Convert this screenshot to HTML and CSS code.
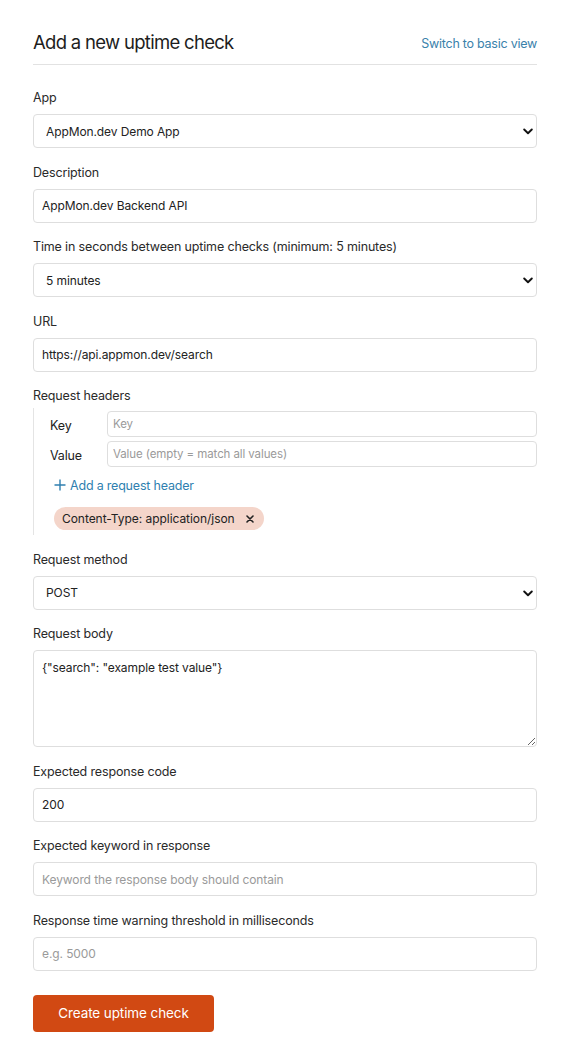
FILE: index.html
```html
<!DOCTYPE html>
<html lang="en">
<head>
<meta charset="utf-8">
<title>Add a new uptime check</title>
<link rel="stylesheet" href="styles.css">
</head>
<body>
<div class="page">
  <div class="header">
    <h1 class="title">Add a new uptime check</h1>
    <a class="switch" href="#">Switch to basic view</a>
  </div>

  <form class="form">
    <div class="field">
      <label class="label">App</label>
      <div class="select-wrap">
        <select class="control select"><option>AppMon.dev Demo App</option></select>
        <svg class="chev" width="10" height="7" viewBox="0 0 10 7"><path d="M1.2 1.5 L5 5.2 L8.8 1.5" fill="none" stroke="#111" stroke-width="1.9" stroke-linecap="round" stroke-linejoin="round"/></svg>
      </div>
    </div>

    <div class="field">
      <label class="label">Description</label>
      <input class="control input" type="text" value="AppMon.dev Backend API">
    </div>

    <div class="field">
      <label class="label">Time in seconds between uptime checks (minimum: 5 minutes)</label>
      <div class="select-wrap">
        <select class="control select"><option>5 minutes</option></select>
        <svg class="chev" width="10" height="7" viewBox="0 0 10 7"><path d="M1.2 1.5 L5 5.2 L8.8 1.5" fill="none" stroke="#111" stroke-width="1.9" stroke-linecap="round" stroke-linejoin="round"/></svg>
      </div>
    </div>

    <div class="field">
      <label class="label">URL</label>
      <input class="control input" type="text" value="https://api.appmon.dev/search">
    </div>

    <div class="field">
      <label class="label label-tight">Request headers</label>
      <div class="headers">
        <div class="hrow">
          <span class="hlabel">Key</span>
          <input class="control small" type="text" placeholder="Key">
        </div>
        <div class="hrow">
          <span class="hlabel">Value</span>
          <input class="control small" type="text" placeholder="Value (empty = match all values)">
        </div>
        <a class="add" href="#">
          <svg width="12" height="12" viewBox="0 0 12 12"><path d="M6 0.5 V11.5 M0.5 6 H11.5" stroke="#2f7fb0" stroke-width="1.4" fill="none"/></svg>
          <span>Add a request header</span>
        </a>
        <div class="chips">
          <span class="chip">Content-Type: application/json
            <svg class="x" width="8" height="8" viewBox="0 0 8 8"><path d="M1 1 L7 7 M7 1 L1 7" stroke="#222" stroke-width="1.6" stroke-linecap="round"/></svg>
          </span>
        </div>
      </div>
    </div>

    <div class="field">
      <label class="label">Request method</label>
      <div class="select-wrap">
        <select class="control select"><option>POST</option></select>
        <svg class="chev" width="10" height="7" viewBox="0 0 10 7"><path d="M1.2 1.5 L5 5.2 L8.8 1.5" fill="none" stroke="#111" stroke-width="1.9" stroke-linecap="round" stroke-linejoin="round"/></svg>
      </div>
    </div>

    <div class="field">
      <label class="label">Request body</label>
      <textarea class="control textarea">{"search": "example test value"}</textarea>
    </div>

    <div class="field">
      <label class="label">Expected response code</label>
      <input class="control input" type="text" value="200">
    </div>

    <div class="field">
      <label class="label">Expected keyword in response</label>
      <input class="control input" type="text" placeholder="Keyword the response body should contain">
    </div>

    <div class="field last">
      <label class="label">Response time warning threshold in milliseconds</label>
      <input class="control input" type="text" placeholder="e.g. 5000">
    </div>

    <button class="submit" type="button">Create uptime check</button>
  </form>
</div>
</body>
</html>
```

FILE: styles.css
```css
* { box-sizing: border-box; }

html, body {
  margin: 0;
  padding: 0;
  background: #ffffff;
}

body {
  font-family: Inter, "Noto Sans", "Liberation Sans", sans-serif;
  font-size: 13px;
  color: #222;
}

.page {
  width: 504px;
  margin-left: 33px;
  padding-top: 30px;
}

.header {
  display: flex;
  justify-content: space-between;
  align-items: center;
  padding-bottom: 10px;
  border-bottom: 1px solid #e2e2e2;
}

.title {
  margin: 0;
  font-size: 18.5px;
  font-weight: 400;
  line-height: 24px;
  color: #1d1d1d;
  letter-spacing: -0.7px;
}

.switch {
  font-size: 12.5px;
  letter-spacing: -0.25px;
  color: #3a82ab;
  text-decoration: none;
  margin-top: 3px;
}

.form {
  display: flex;
  flex-direction: column;
  padding-top: 24px;
}

.field {
  display: flex;
  flex-direction: column;
  margin-bottom: 15.5px;
}

.field.last { margin-bottom: 24px; }

.label {
  display: block;
  line-height: 17px;
  margin-bottom: 8px;
  font-size: 12.5px;
  letter-spacing: -0.15px;
  color: #2a2a2a;
}

.label-tight { margin-bottom: 4px; }

.control {
  font-family: inherit;
  font-size: 12px;
  letter-spacing: -0.1px;
  color: #222;
  background: #fff;
  border: 1px solid #dedede;
  border-radius: 4px;
  outline: none;
  width: 100%;
}

.control::placeholder { color: #9a9a9a; opacity: 1; }

.input {
  height: 34px;
  padding: 0 8px;
}

.select-wrap {
  position: relative;
}

.select {
  height: 34px;
  padding: 0 12px;
  appearance: none;
  -webkit-appearance: none;
}

.chev {
  position: absolute;
  right: 4px;
  top: 14px;
  pointer-events: none;
}

.textarea {
  height: 97px;
  padding: 8px 8px;
  resize: vertical;
  line-height: 18px;
  display: block;
}

.headers {
  border-left: 1px solid #e4e4e4;
  padding: 3px 0 5px 16px;
  display: flex;
  flex-direction: column;
}

.hrow {
  display: flex;
  align-items: center;
  height: 26px;
  margin-bottom: 4px;
}

.hlabel {
  width: 57px;
  flex: none;
  font-size: 12.5px;
  letter-spacing: -0.15px;
  color: #222;
  padding-top: 3px;
}

.small {
  height: 26px;
  padding: 0 5px;
  font-size: 11.5px;
}

.add {
  display: flex;
  align-items: center;
  gap: 4px;
  margin-top: 6px;
  margin-left: 4px;
  height: 16px;
  color: #2f7fb0;
  text-decoration: none;
  font-size: 12.5px;
  letter-spacing: -0.2px;
}

.chips {
  display: flex;
  margin-top: 14px;
  margin-left: 4px;
}

.chip {
  display: inline-flex;
  align-items: center;
  height: 23px;
  padding: 0 10px 0 8px;
  background: #f4d5ca;
  border-radius: 12px;
  color: #222;
  font-size: 12px;
  letter-spacing: -0.05px;
}

.chip .x {
  margin-left: 11px;
}

.submit {
  align-self: flex-start;
  width: 181px;
  height: 37px;
  background: #d14913;
  color: #fff;
  border: none;
  border-radius: 4px;
  font-family: inherit;
  font-size: 13.5px;
  letter-spacing: -0.1px;
}
```
